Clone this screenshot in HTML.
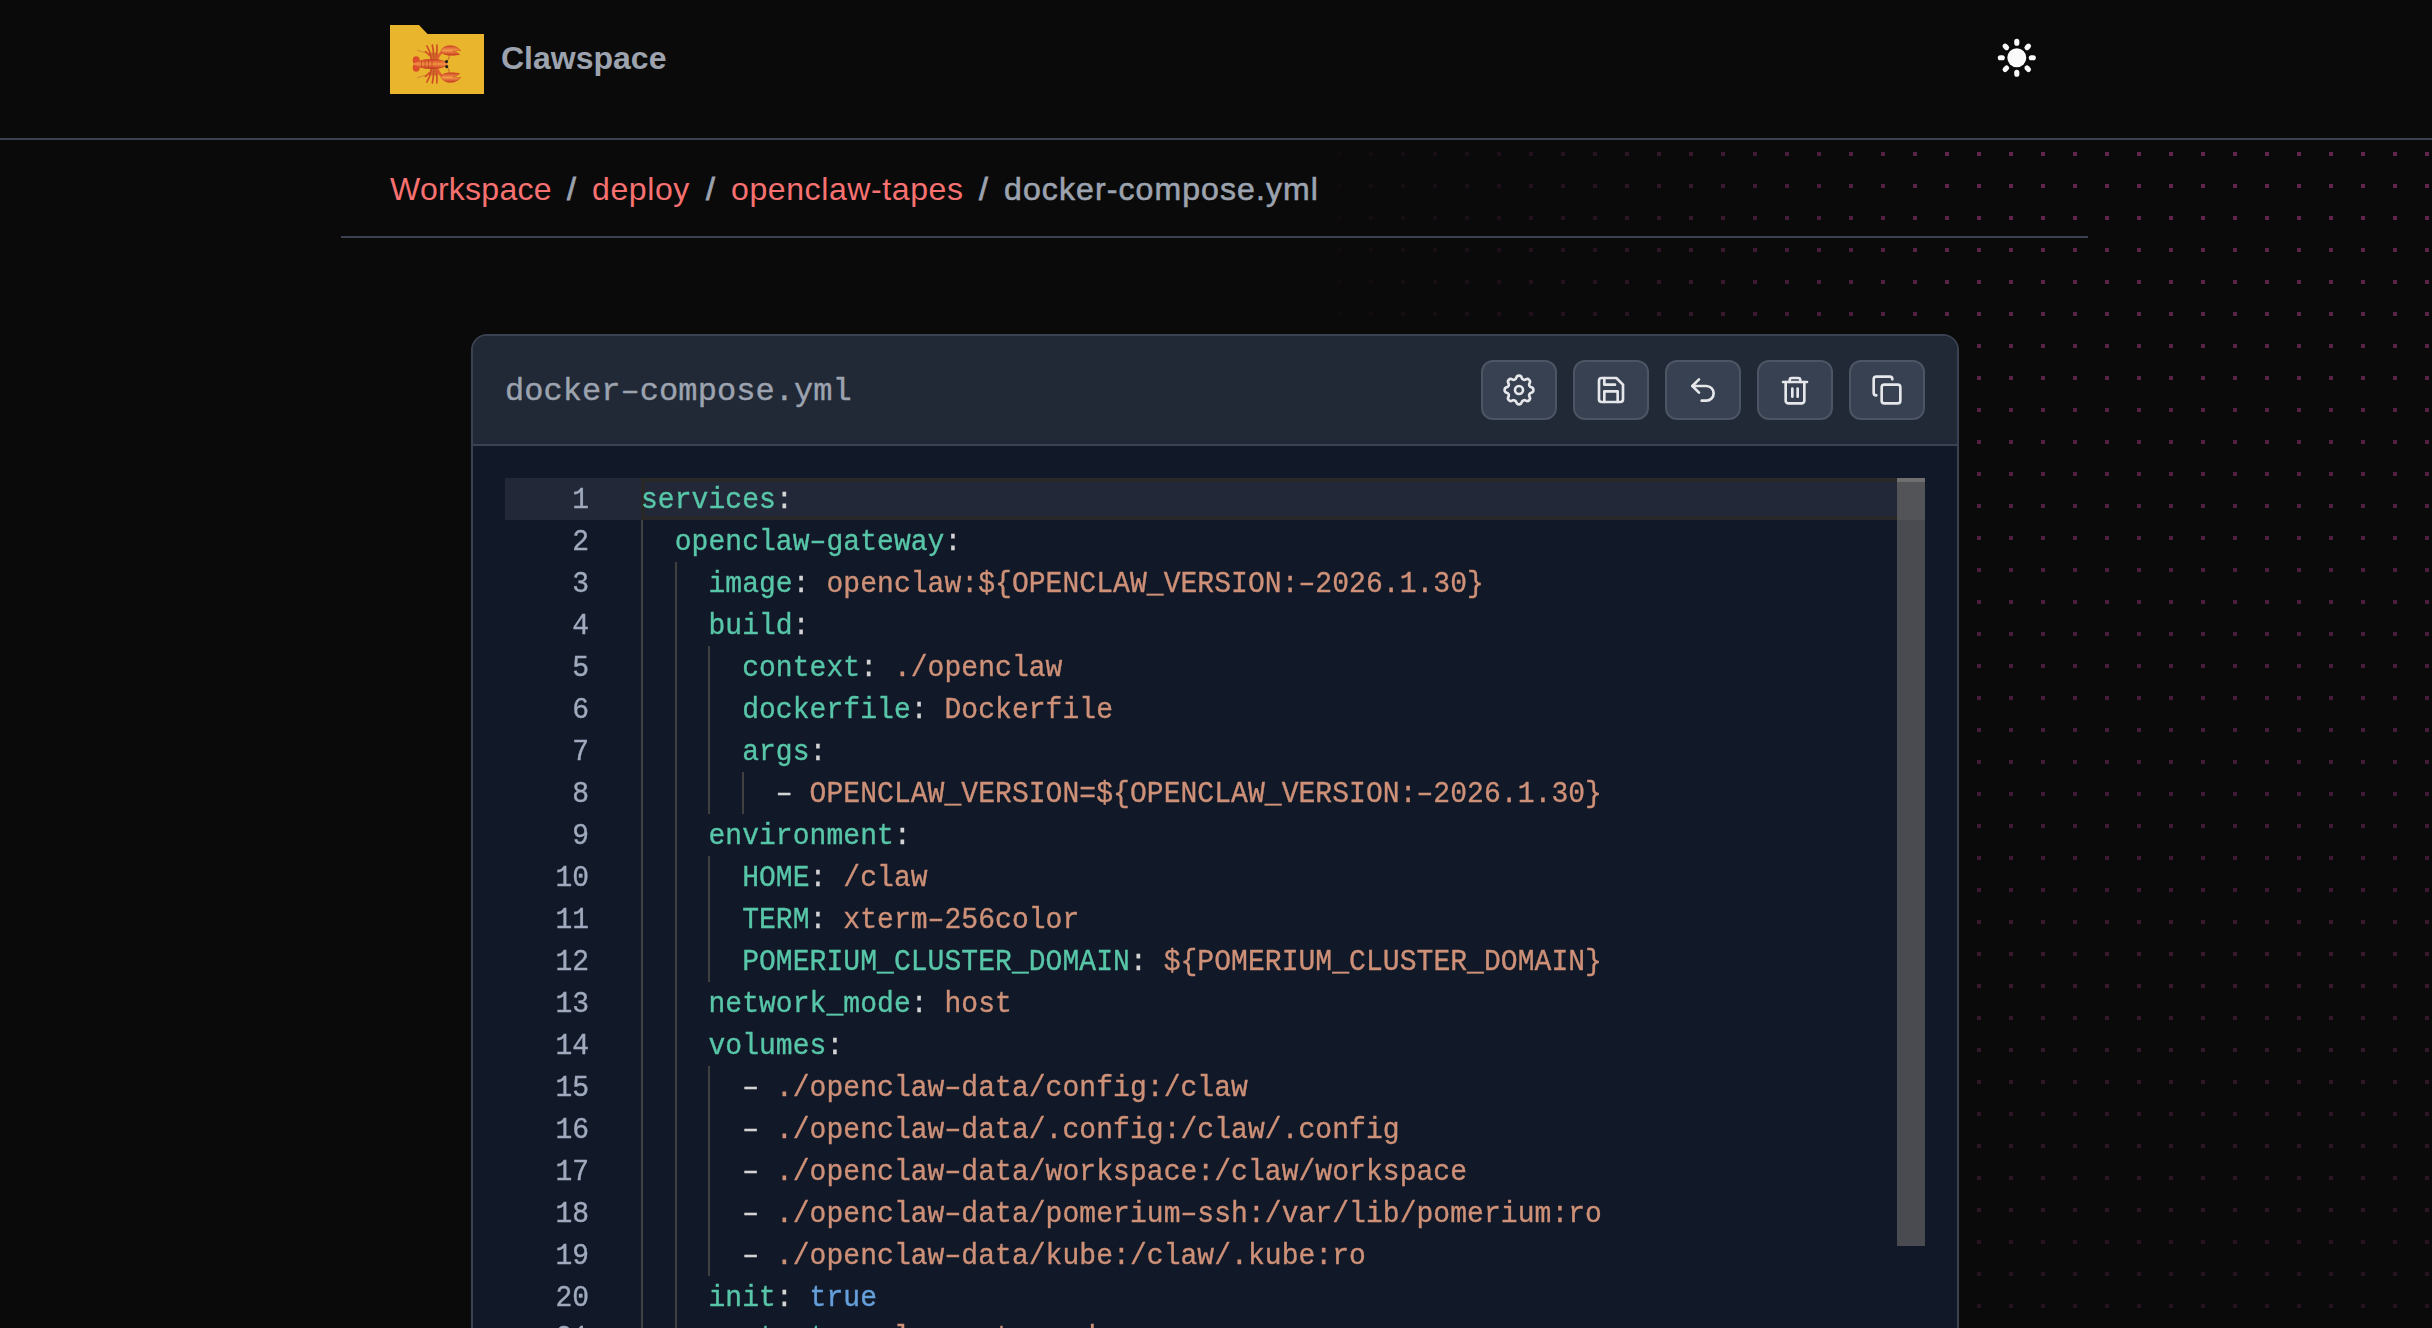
<!DOCTYPE html>
<html><head><meta charset="utf-8">
<style>
*{box-sizing:border-box;margin:0;padding:0}
html,body{width:2432px;height:1328px;overflow:hidden;background:#0a0a0a;font-family:"Liberation Sans",sans-serif}
.dots{position:absolute;left:0;top:140px;width:2432px;height:1188px;
 background-image:conic-gradient(from 270deg at 4px 4px,#63264f 25%,transparent 0);
 background-size:32px 32px;background-position:25px 12px;
 -webkit-mask-image:linear-gradient(to right,transparent 1280px,rgba(0,0,0,.35) 1600px,#000 1960px),linear-gradient(to bottom,#000 0,rgba(0,0,0,.3) 1188px);
 -webkit-mask-composite:source-in;mask-composite:intersect}
.hdr{position:absolute;left:0;top:0;width:2432px;height:140px;background:#0a0a0a;border-bottom:2px solid #3b4252}
.logo{position:absolute;left:390px;top:24px;width:94px;height:70px}
.brand{position:absolute;left:501px;top:38px;font-weight:bold;font-size:32px;color:#9ca3af;line-height:40px}
.sun{position:absolute;left:1992px;top:33px;width:50px;height:50px}
.bc{position:absolute;top:169px;font-size:32px;line-height:40px;white-space:nowrap}
.bc a{color:#f87171;text-decoration:none}
.sep{color:#9ca3af;-webkit-text-stroke:0.9px #9ca3af}
.bcl{position:absolute;left:341px;top:236px;width:1747px;height:2px;background:#3b4252}
.card{position:absolute;left:471px;top:334px;width:1488px;height:1100px;border:2px solid #3b4252;border-radius:16px;overflow:hidden;background:#111827}
.chead{position:absolute;left:0;top:0;right:0;height:110px;background:#212836;border-bottom:2px solid #3b4252}
.ctitle{position:absolute;left:32px;top:36px;font-family:"Liberation Mono",monospace;font-size:32px;line-height:40px;color:#9ca3af;letter-spacing:0.06px;-webkit-text-stroke:0.4px #9ca3af}
.btn{position:absolute;top:24px;width:76px;height:60px;background:#374151;border:2px solid #4b5563;border-radius:12px}
.btn svg{position:absolute;left:20px;top:12px;width:32px;height:32px;fill:none;stroke:#e5e7eb;stroke-width:2;stroke-linecap:round;stroke-linejoin:round}
.ed{position:absolute;left:32px;top:142px;width:1421px;height:1000px}
.ln{position:absolute;left:0;width:136px;height:42px;padding-top:2px;transform:scaleY(1.08);transform-origin:0 31px;-webkit-text-stroke:0.35px currentColor;font-family:"Liberation Mono",monospace;font-size:28px;line-height:42px;color:#a0aabe;text-align:right;padding-right:52px}
.code{position:absolute;left:136px;height:42px;padding-top:2px;transform:scaleY(1.06);transform-origin:0 31px;-webkit-text-stroke:0.35px currentColor;font-family:"Liberation Mono",monospace;font-size:28px;line-height:42px;white-space:pre;color:#d4d4d4;letter-spacing:0.056px}
.k{color:#58c6a8}.s{color:#ce9178}.b{color:#66a0dc}
.g{position:absolute;width:2px;background:#404040}
.cur{position:absolute;left:0;top:0;width:136px;height:42px;background:#222838}
.curc{position:absolute;left:136px;top:0;width:1256px;height:42px;background:#222838;border:4px solid #282828;border-right:none}
.sb{position:absolute;left:1392px;top:0;width:28px;height:768px;background:#4a4b50}
</style></head><body>
<div class="dots"></div>
<div class="hdr">
 <svg class="logo" viewBox="0 0 94 70">
  <path d="M0 1 H29 L37.5 10 H94 V70 H0 Z" fill="#e9b52d"/>
  <defs>
   <linearGradient id="lg" x1="0" y1="0" x2="0" y2="1"><stop offset="0" stop-color="#c93a22"/><stop offset=".5" stop-color="#f29342"/><stop offset="1" stop-color="#c0321e"/></linearGradient>
   <linearGradient id="cg" x1="0" y1="0" x2="0" y2="1"><stop offset="0" stop-color="#d2452a"/><stop offset=".5" stop-color="#f39a48"/><stop offset="1" stop-color="#c93a22"/></linearGradient>
   <linearGradient id="cg2" x1="0" y1="1" x2="0" y2="0"><stop offset="0" stop-color="#d2452a"/><stop offset=".5" stop-color="#f39a48"/><stop offset="1" stop-color="#c93a22"/></linearGradient>
  </defs>
  <g>
  <rect x="40" y="28.5" width="7.5" height="7" fill="#c26a2c" opacity=".8"/>
  <g stroke="#d04c27" stroke-width="1.7" stroke-linecap="round" fill="none">
   <path d="M41.2 34 L39.6 27.5 L36.9 22"/>
   <path d="M43.8 34 L43.2 26 L42.3 21"/>
   <path d="M46.4 34 L47 26 L46.9 21.2"/>
   <path d="M40 31.5 L35.5 27.6"/>
  </g>
  <path d="M35.3 28.6 Q31 27.4 27.4 26.2" stroke="#cf7a34" stroke-width=".9" fill="none" stroke-linecap="round"/>
  <path d="M57 37.5 Q60 34 59 30 Q58 26.5 55 25.5" stroke="#b8452a" stroke-width=".7" fill="none"/>
  <path d="M46.5 36 Q48.5 30.5 52.5 27.5" stroke="#de5f2e" stroke-width="2.8" fill="none" stroke-linecap="round"/>
  <path d="M51 27.4 Q52 23 58 21.8 Q66 20.8 70.8 26.6 Q67 25.8 63 27.3 Q67.5 28 69.6 30.4 Q63 31.8 57 31 Q52.5 30.2 51 27.4Z" fill="url(#cg)" stroke="#c2341f" stroke-width=".5"/>
  <ellipse cx="26.2" cy="36.2" rx="3.5" ry="4" fill="#db4d2b"/>
  </g>
  <g transform="translate(0 80) scale(1 -1)">
  <rect x="40" y="28.5" width="7.5" height="7" fill="#c26a2c" opacity=".8"/>
  <g stroke="#d04c27" stroke-width="1.7" stroke-linecap="round" fill="none">
   <path d="M41.2 34 L39.6 27.5 L36.9 22"/>
   <path d="M43.8 34 L43.2 26 L42.3 21"/>
   <path d="M46.4 34 L47 26 L46.9 21.2"/>
   <path d="M40 31.5 L35.5 27.6"/>
  </g>
  <path d="M35.3 28.6 Q31 27.4 27.4 26.2" stroke="#cf7a34" stroke-width=".9" fill="none" stroke-linecap="round"/>
  <path d="M57 37.5 Q60 34 59 30 Q58 26.5 55 25.5" stroke="#b8452a" stroke-width=".7" fill="none"/>
  <path d="M46.5 36 Q48.5 30.5 52.5 27.5" stroke="#de5f2e" stroke-width="2.8" fill="none" stroke-linecap="round"/>
  <path d="M51 27.4 Q52 23 58 21.8 Q66 20.8 70.8 26.6 Q67 25.8 63 27.3 Q67.5 28 69.6 30.4 Q63 31.8 57 31 Q52.5 30.2 51 27.4Z" fill="url(#cg2)" stroke="#c2341f" stroke-width=".5"/>
  <ellipse cx="26.2" cy="36.2" rx="3.5" ry="4" fill="#db4d2b"/>
  </g>
  <path d="M23.3 40 Q29 34.6 44 35 Q55.5 35.4 58.2 40 Q55.5 44.6 44 45 Q29 45.4 23.3 40Z" fill="url(#lg)"/>
  <g stroke="#c2401f" stroke-width=".9" opacity=".75"><path d="M31.5 36.3v7.4M35 35.7v8.6M38.5 35.4v9.2M42 35.3v9.4"/></g>
  <circle cx="56.5" cy="37.6" r="1.6" fill="#1f1f1f"/><circle cx="56.7" cy="42.6" r="1.6" fill="#1f1f1f"/>
 </svg>
 <div class="brand">Clawspace</div>
 <svg class="sun" viewBox="0 0 50 50">
  <circle cx="24.8" cy="24.8" r="9.5" fill="#fafafa"/>
  <g stroke="#fafafa" stroke-width="5.1" stroke-linecap="round">
   <line x1="24.8" y1="8.3" x2="24.8" y2="10.3"/>
   <line x1="24.8" y1="39.3" x2="24.8" y2="41.3"/>
   <line x1="8.3" y1="24.8" x2="10.3" y2="24.8"/>
   <line x1="39.3" y1="24.8" x2="41.3" y2="24.8"/>
   <line x1="13.1" y1="13.1" x2="14.6" y2="14.6"/>
   <line x1="35" y1="35" x2="36.5" y2="36.5"/>
   <line x1="13.1" y1="36.5" x2="14.6" y2="35"/>
   <line x1="35" y1="14.6" x2="36.5" y2="13.1"/>
  </g>
 </svg>
</div>
<div class="bc" style="left:390px;letter-spacing:0.25px"><a>Workspace</a></div>
<div class="bc sep" style="left:567px">/</div>
<div class="bc" style="left:592px;letter-spacing:0.6px"><a>deploy</a></div>
<div class="bc sep" style="left:706px">/</div>
<div class="bc" style="left:731px;letter-spacing:0.6px"><a>openclaw-tapes</a></div>
<div class="bc sep" style="left:979px">/</div>
<div class="bc" style="left:1004px;color:#9ca3af;letter-spacing:1.1px;-webkit-text-stroke:0.6px #9ca3af">docker-compose.yml</div>
<div class="bcl"></div>

<div class="card">
 <div class="chead">
  <div class="ctitle">docker&#8211;compose.yml</div>
  <div class="btn" style="left:1008px"><svg viewBox="0 0 24 24"><path transform="translate(12 12) scale(1.2) translate(-12 -12)" stroke-width="1.667" d="M10.325 4.317c.426-1.756 2.924-1.756 3.35 0a1.724 1.724 0 002.573 1.066c1.543-.94 3.31.826 2.37 2.37a1.724 1.724 0 001.065 2.572c1.756.426 1.756 2.924 0 3.35a1.724 1.724 0 00-1.066 2.573c.94 1.543-.826 3.31-2.37 2.37a1.724 1.724 0 00-2.572 1.065c-.426 1.756-2.924 1.756-3.35 0a1.724 1.724 0 00-2.573-1.066c-1.543.94-3.31-.826-2.37-2.37a1.724 1.724 0 00-1.065-2.572c-1.756-.426-1.756-2.924 0-3.35a1.724 1.724 0 001.066-2.573c-.94-1.543.826-3.31 2.37-2.37.996.608 2.296.07 2.572-1.065z"/><circle cx="12" cy="12" r="3"/></svg></div>
  <div class="btn" style="left:1100px"><svg viewBox="0 0 24 24"><path d="M19 21H5a2 2 0 0 1-2-2V5a2 2 0 0 1 2-2h11l5 5v11a2 2 0 0 1-2 2z"/><path d="M17 21v-8H7v8"/><path d="M7 3v5h8"/></svg></div>
  <div class="btn" style="left:1192px"><svg viewBox="0 0 24 24"><path d="M9 14 4 9l5-5"/><path d="M4 9h10.5a5.5 5.5 0 0 1 5.5 5.5a5.5 5.5 0 0 1-5.5 5.5H11"/></svg></div>
  <div class="btn" style="left:1284px"><svg viewBox="0 0 24 24"><path d="M3 6h18"/><path d="M19 6v14c0 1-1 2-2 2H7c-1 0-2-1-2-2V6"/><path d="M8 6V4.6c0-.9.7-1.6 1.6-1.6h4.8c.9 0 1.6.7 1.6 1.6V6"/><line x1="10" x2="10" y1="11" y2="17"/><line x1="14" x2="14" y1="11" y2="17"/></svg></div>
  <div class="btn" style="left:1376px"><svg viewBox="0 0 24 24"><rect width="14" height="14" x="8" y="8" rx="2" ry="2"/><path d="M4 16c-1.1 0-2-.9-2-2V4c0-1.1.9-2 2-2h10c1.1 0 2 .9 2 2"/></svg></div>
 </div>
 <div class="ed" id="ed">
<div class="cur"></div><div class="curc"></div>
<div class="g" style="left:136.0px;top:42px;height:42px"></div>
<div class="g" style="left:136.0px;top:84px;height:42px"></div>
<div class="g" style="left:169.7px;top:84px;height:42px"></div>
<div class="g" style="left:136.0px;top:126px;height:42px"></div>
<div class="g" style="left:169.7px;top:126px;height:42px"></div>
<div class="g" style="left:136.0px;top:168px;height:42px"></div>
<div class="g" style="left:169.7px;top:168px;height:42px"></div>
<div class="g" style="left:203.4px;top:168px;height:42px"></div>
<div class="g" style="left:136.0px;top:210px;height:42px"></div>
<div class="g" style="left:169.7px;top:210px;height:42px"></div>
<div class="g" style="left:203.4px;top:210px;height:42px"></div>
<div class="g" style="left:136.0px;top:252px;height:42px"></div>
<div class="g" style="left:169.7px;top:252px;height:42px"></div>
<div class="g" style="left:203.4px;top:252px;height:42px"></div>
<div class="g" style="left:136.0px;top:294px;height:42px"></div>
<div class="g" style="left:169.7px;top:294px;height:42px"></div>
<div class="g" style="left:203.4px;top:294px;height:42px"></div>
<div class="g" style="left:237.1px;top:294px;height:42px"></div>
<div class="g" style="left:136.0px;top:336px;height:42px"></div>
<div class="g" style="left:169.7px;top:336px;height:42px"></div>
<div class="g" style="left:136.0px;top:378px;height:42px"></div>
<div class="g" style="left:169.7px;top:378px;height:42px"></div>
<div class="g" style="left:203.4px;top:378px;height:42px"></div>
<div class="g" style="left:136.0px;top:420px;height:42px"></div>
<div class="g" style="left:169.7px;top:420px;height:42px"></div>
<div class="g" style="left:203.4px;top:420px;height:42px"></div>
<div class="g" style="left:136.0px;top:462px;height:42px"></div>
<div class="g" style="left:169.7px;top:462px;height:42px"></div>
<div class="g" style="left:203.4px;top:462px;height:42px"></div>
<div class="g" style="left:136.0px;top:504px;height:42px"></div>
<div class="g" style="left:169.7px;top:504px;height:42px"></div>
<div class="g" style="left:136.0px;top:546px;height:42px"></div>
<div class="g" style="left:169.7px;top:546px;height:42px"></div>
<div class="g" style="left:136.0px;top:588px;height:42px"></div>
<div class="g" style="left:169.7px;top:588px;height:42px"></div>
<div class="g" style="left:203.4px;top:588px;height:42px"></div>
<div class="g" style="left:136.0px;top:630px;height:42px"></div>
<div class="g" style="left:169.7px;top:630px;height:42px"></div>
<div class="g" style="left:203.4px;top:630px;height:42px"></div>
<div class="g" style="left:136.0px;top:672px;height:42px"></div>
<div class="g" style="left:169.7px;top:672px;height:42px"></div>
<div class="g" style="left:203.4px;top:672px;height:42px"></div>
<div class="g" style="left:136.0px;top:714px;height:42px"></div>
<div class="g" style="left:169.7px;top:714px;height:42px"></div>
<div class="g" style="left:203.4px;top:714px;height:42px"></div>
<div class="g" style="left:136.0px;top:756px;height:42px"></div>
<div class="g" style="left:169.7px;top:756px;height:42px"></div>
<div class="g" style="left:203.4px;top:756px;height:42px"></div>
<div class="g" style="left:136.0px;top:798px;height:42px"></div>
<div class="g" style="left:169.7px;top:798px;height:42px"></div>
<div class="g" style="left:136.0px;top:840px;height:42px"></div>
<div class="g" style="left:169.7px;top:840px;height:42px"></div>
<div class="ln" style="top:0px">1</div>
<div class="code" style="top:0px"><span class="k">services</span>:</div>
<div class="ln" style="top:42px">2</div>
<div class="code" style="top:42px">  <span class="k">openclaw&#8211;gateway</span>:</div>
<div class="ln" style="top:84px">3</div>
<div class="code" style="top:84px">    <span class="k">image</span>: <span class="s">openclaw:${OPENCLAW_VERSION:&#8211;2026.1.30}</span></div>
<div class="ln" style="top:126px">4</div>
<div class="code" style="top:126px">    <span class="k">build</span>:</div>
<div class="ln" style="top:168px">5</div>
<div class="code" style="top:168px">      <span class="k">context</span>: <span class="s">./openclaw</span></div>
<div class="ln" style="top:210px">6</div>
<div class="code" style="top:210px">      <span class="k">dockerfile</span>: <span class="s">Dockerfile</span></div>
<div class="ln" style="top:252px">7</div>
<div class="code" style="top:252px">      <span class="k">args</span>:</div>
<div class="ln" style="top:294px">8</div>
<div class="code" style="top:294px">        &#8211; <span class="s">OPENCLAW_VERSION=${OPENCLAW_VERSION:&#8211;2026.1.30}</span></div>
<div class="ln" style="top:336px">9</div>
<div class="code" style="top:336px">    <span class="k">environment</span>:</div>
<div class="ln" style="top:378px">10</div>
<div class="code" style="top:378px">      <span class="k">HOME</span>: <span class="s">/claw</span></div>
<div class="ln" style="top:420px">11</div>
<div class="code" style="top:420px">      <span class="k">TERM</span>: <span class="s">xterm&#8211;256color</span></div>
<div class="ln" style="top:462px">12</div>
<div class="code" style="top:462px">      <span class="k">POMERIUM_CLUSTER_DOMAIN</span>: <span class="s">${POMERIUM_CLUSTER_DOMAIN}</span></div>
<div class="ln" style="top:504px">13</div>
<div class="code" style="top:504px">    <span class="k">network_mode</span>: <span class="s">host</span></div>
<div class="ln" style="top:546px">14</div>
<div class="code" style="top:546px">    <span class="k">volumes</span>:</div>
<div class="ln" style="top:588px">15</div>
<div class="code" style="top:588px">      &#8211; <span class="s">./openclaw&#8211;data/config:/claw</span></div>
<div class="ln" style="top:630px">16</div>
<div class="code" style="top:630px">      &#8211; <span class="s">./openclaw&#8211;data/.config:/claw/.config</span></div>
<div class="ln" style="top:672px">17</div>
<div class="code" style="top:672px">      &#8211; <span class="s">./openclaw&#8211;data/workspace:/claw/workspace</span></div>
<div class="ln" style="top:714px">18</div>
<div class="code" style="top:714px">      &#8211; <span class="s">./openclaw&#8211;data/pomerium&#8211;ssh:/var/lib/pomerium:ro</span></div>
<div class="ln" style="top:756px">19</div>
<div class="code" style="top:756px">      &#8211; <span class="s">./openclaw&#8211;data/kube:/claw/.kube:ro</span></div>
<div class="ln" style="top:798px">20</div>
<div class="code" style="top:798px">    <span class="k">init</span>: <span class="b">true</span></div>
<div class="ln" style="top:838px">21</div>
<div class="code" style="top:838px">    <span class="k">restart</span>: <span class="s">unless&#8211;stopped</span></div>
<div class="sb"></div><div class="sb" style="height:42px;background:#535458"></div><div class="sb" style="height:4px;background:#6f6f70"></div>
 </div>
</div>
</body></html>
